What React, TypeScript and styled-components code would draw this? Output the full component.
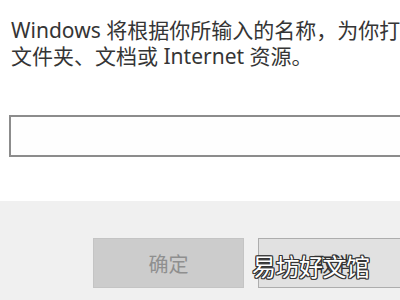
import React from "react";
import styled, { createGlobalStyle } from "styled-components";

const GlobalStyle = createGlobalStyle`
  html, body {
    margin: 0;
    padding: 0;
    background: #ffffff;
    overflow: hidden;
  }
  #root {
    width: 400px;
    height: 300px;
  }
`;

const Dialog = styled.div`
  width: 400px;
  height: 300px;
  display: flex;
  flex-direction: column;
  overflow: hidden;
  position: relative;
  font-family: "Noto Sans", "Noto Sans CJK SC", sans-serif;
`;

const TopPanel = styled.div`
  height: 201px;
  background: #ffffff;
  padding: 17px 0 0 11px;
  box-sizing: border-box;
  display: flex;
  flex-direction: column;
`;

const Message = styled.p`
  margin: 0;
  font-size: 21px;
  line-height: 26px;
  color: #353535;
  white-space: nowrap;
`;

const InputRow = styled.div`
  display: flex;
  align-items: center;
  margin: 46px 0 0 -11px;
`;

const Label = styled.span`
  width: 11px;
  overflow: hidden;
  display: flex;
  justify-content: flex-end;
  font-size: 16px;
  color: #b5b5b5;
  line-height: 16px;
  padding-right: 9px;
  box-sizing: border-box;
`;

const Input = styled.div`
  width: 420px;
  height: 42px;
  box-sizing: border-box;
  border: 2px solid #8c8c8c;
  background: #fefefe;
  flex-shrink: 0;
`;

const BottomPanel = styled.div`
  flex: 1;
  background: #f0f0f0;
  display: flex;
  align-items: flex-start;
  padding: 37px 0 0 93px;
  gap: 14px;
`;

const Button = styled.div<{ $disabled?: boolean }>`
  width: 151px;
  height: 50px;
  flex-shrink: 0;
  box-sizing: border-box;
  display: flex;
  align-items: center;
  justify-content: center;
  font-size: 20px;
  font-family: "Noto Sans CJK SC", sans-serif;
  background: ${(p) => (p.$disabled ? "#cccccc" : "#e1e1e1")};
  border: 1px solid ${(p) => (p.$disabled ? "#c4c4c4" : "#adadad")};
  color: ${(p) => (p.$disabled ? "#8f8f8f" : "#333333")};
`;

const Watermark = styled.div`
  position: absolute;
  left: 252px;
  top: 249px;
  font-family: "Noto Sans CJK SC", sans-serif;
  font-size: 24px;
  line-height: 34px;
  color: #ffffff;
  letter-spacing: -0.5px;
  text-shadow: -1px -1px 0 #333, 1px -1px 0 #333, -1px 1px 0 #333,
    1px 1px 0 #333, 0 1px 0 #333, 0 -1px 0 #333, 1px 0 0 #333, -1px 0 0 #333;
`;

export default function App() {
  return (
    <>
      <GlobalStyle />
      <Dialog>
        <TopPanel>
          <Message>Windows 将根据你所输入的名称，为你打开相应的程序、</Message>
          <Message>文件夹、文档或 Internet 资源。</Message>
          <InputRow>
            <Label>:</Label>
            <Input />
          </InputRow>
        </TopPanel>
        <BottomPanel>
          <Button $disabled>确定</Button>
          <Button>取消</Button>
        </BottomPanel>
        <Watermark>易坊好文馆</Watermark>
      </Dialog>
    </>
  );
}
